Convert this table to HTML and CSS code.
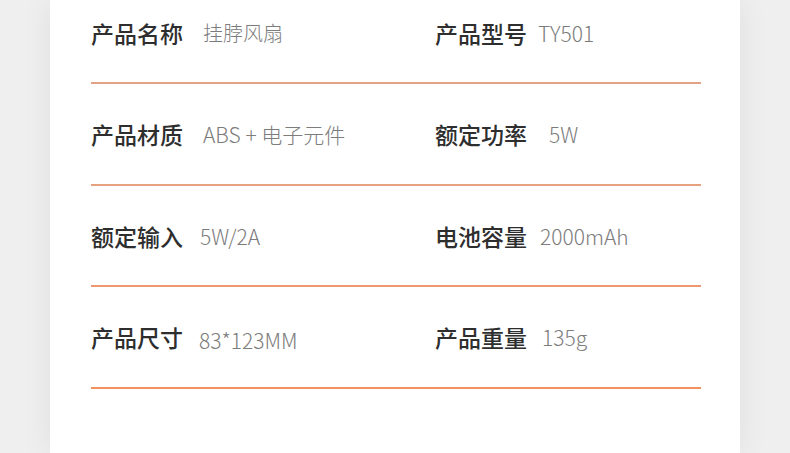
FILE: index.html
```html
<!DOCTYPE html>
<html lang="zh">
<head>
<meta charset="utf-8">
<link rel="stylesheet" href="styles.css">
</head>
<body>
<div class="page">
  <div class="card">
    <div class="row first c1">
      <div class="cell"><span class="label">产品名称</span><span class="value cjk">挂脖风扇</span></div>
      <div class="cell"><span class="label">产品型号</span><span class="value g11">TY501</span></div>
    </div>
    <div class="row c2">
      <div class="cell"><span class="label">产品材质</span><span class="value">ABS + 电子元件</span></div>
      <div class="cell"><span class="label">额定功率</span><span class="value g22">5W</span></div>
    </div>
    <div class="row c3">
      <div class="cell"><span class="label">额定输入</span><span class="value g17">5W/2A</span></div>
      <div class="cell"><span class="label">电池容量</span><span class="value g13">2000mAh</span></div>
    </div>
    <div class="row c4">
      <div class="cell"><span class="label">产品尺寸</span><span class="value g16 low">83*123MM</span></div>
      <div class="cell"><span class="label">产品重量</span><span class="value g15">135g</span></div>
    </div>
  </div>
</div>
</body>
</html>
```
FILE: styles.css
```css
html, body {
  margin: 0;
  padding: 0;
}
body {
  background: #efefef;
  width: 790px;
  height: 453px;
  overflow: hidden;
  font-family: "Noto Sans CJK SC", "Noto Sans", sans-serif;
}
.page {
  display: flex;
  height: 453px;
  padding-left: 50px;
}
.card {
  width: 690px;
  height: 453px;
  background: #ffffff;
  box-shadow: 0 0 30px rgba(0, 0, 0, 0.07);
  padding-left: 41px;
  box-sizing: border-box;
}
.row {
  width: 610px;
  display: grid;
  grid-template-columns: 344px 1fr;
  padding-top: 32px;
  padding-bottom: 31.4px;
  border-bottom: 2px solid #e8a07c;
}
.row.first {
  padding-top: 15px;
}
.c1 { border-bottom-color: #e2a283; }
.c2 { border-bottom-color: #e6a17e; }
.c3 { border-bottom-color: #ee9870; }
.c4 { border-bottom-color: #f4925f; }
.cell {
  display: flex;
  align-items: center;
  height: 36px;
}
.label {
  font-size: 23px;
  font-weight: 500;
  color: #2e2e2e;
  line-height: 36px;
}
.value {
  font-size: 21px;
  color: #7c7c7c;
  margin-left: 20px;
  line-height: 36px;
  font-weight: 300;
}
.value.cjk { font-size: 20px; }
.g11 { margin-left: 11px; }
.g13 { margin-left: 13px; }
.g15 { margin-left: 15px; }
.g16 { margin-left: 16px; }
.g17 { margin-left: 17px; }
.g22 { margin-left: 22px; }
.low { position: relative; top: 3px; }
```
